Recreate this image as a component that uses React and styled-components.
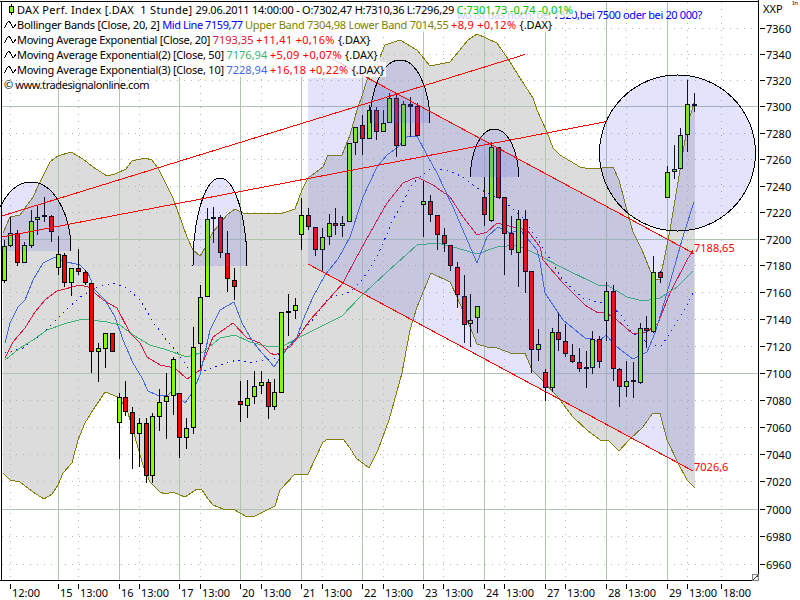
import React from "react";
import styled, { createGlobalStyle } from "styled-components";

const GlobalStyle = createGlobalStyle`
  html, body { margin: 0; padding: 0; background: #fff; }
  #root { width: 800px; height: 600px; overflow: hidden; }
`;

const FONT = `"Noto Sans", "Liberation Sans", sans-serif`;

/* price axis is logarithmic */
const priceY = (p) => Math.round(563.7 - 9587 * Math.log(p / 6960));
const PRICES = Array.from({ length: 21 }, (_, i) => 6960 + i * 20);
const MAJOR_X = [58, 119, 179, 240, 301, 362, 423, 484, 545, 606, 667];
const MINOR_X = [10, 78, 139, 200, 261, 322, 383, 443, 504, 565, 626, 687, 721];
const X_LABELS = [
  [10, "12:00"], [58, "15"], [78, "13:00"], [119, "16"], [139, "13:00"], [179, "17"], [200, "13:00"],
  [240, "20"], [261, "13:00"], [301, "21"], [322, "13:00"], [362, "22"], [383, "13:00"], [423, "23"],
  [443, "13:00"], [484, "24"], [504, "13:00"], [545, "27"], [565, "13:00"], [606, "28"], [626, "13:00"],
  [667, "29"], [687, "13:00"], [721, "18:00"],
];

const UPPER = [[3,233],[10,217],[20,215],[25,208],[33,197],[40,182],[50,162],[58,156],[71,152],[83,159],[93,167],[107,176],[115,174],[126,169],[132,161],[145,158],[152,160],[158,168],[173,198],[187,237],[193,250],[200,256],[205,248],[213,232],[227,215],[235,209],[243,213],[270,214],[283,213],[295,209],[302,190],[308,178],[323,167],[328,155],[342,155],[350,135],[357,110],[363,93],[367,80],[373,68],[380,57],[385,45],[400,40],[417,50],[430,66],[450,62],[468,40],[477,34],[497,43],[510,62],[520,78],[533,98],[537,110],[547,132],[553,148],[560,155],[580,167],[590,169],[602,168],[613,167],[619,180],[625,203],[633,232],[642,250],[650,270],[655,280],[660,279],[665,255],[670,230],[680,170],[688,123],[695,100]];
const LOWER = [[3,473],[10,480],[20,482],[33,492],[44,499],[52,494],[58,485],[63,473],[72,463],[78,440],[85,423],[93,410],[105,392],[113,395],[120,398],[128,413],[135,437],[143,465],[150,482],[160,492],[165,494],[173,492],[185,497],[197,489],[202,490],[208,499],[213,505],[223,509],[233,509],[247,517],[255,516],[275,506],[280,490],[295,474],[308,474],[323,442],[328,439],[338,440],[343,439],[350,448],[356,458],[369,468],[378,450],[389,420],[402,373],[410,330],[417,307],[431,273],[450,282],[457,297],[470,327],[477,344],[487,347],[497,348],[513,354],[525,353],[532,370],[540,378],[558,397],[573,417],[587,430],[600,440],[608,440],[619,451],[629,440],[643,427],[652,414],[660,413],[667,440],[678,463],[687,480],[695,488]];
const EMA10 = [[5,343],[10,323],[18,307],[25,300],[33,280],[43,263],[55,257],[63,261],[80,265],[88,273],[95,290],[105,300],[115,317],[123,340],[133,363],[142,378],[148,391],[157,395],[168,395],[173,390],[185,403],[192,393],[200,375],[210,330],[220,310],[234,302],[242,323],[253,342],[262,353],[270,362],[274,367],[280,358],[290,345],[297,337],[303,320],[313,297],[325,275],[338,259],[350,237],[363,197],[377,167],[387,155],[398,147],[407,137],[417,136],[427,155],[437,173],[453,207],[465,235],[477,263],[487,237],[498,227],[510,233],[520,230],[527,238],[537,250],[540,262],[545,293],[563,320],[585,338],[593,339],[598,342],[606,335],[617,347],[633,359],[647,352],[655,333],[667,293],[680,247],[685,230],[694,202]];
const EMA20 = [[5,358],[13,342],[25,328],[35,312],[45,300],[57,291],[80,285],[88,287],[103,300],[117,308],[130,333],[140,343],[147,357],[160,365],[175,368],[187,379],[200,370],[213,337],[233,323],[247,338],[260,343],[270,353],[275,355],[290,347],[298,337],[310,320],[328,300],[343,283],[355,260],[370,233],[387,203],[403,183],[417,177],[433,185],[450,197],[463,217],[477,235],[487,232],[497,223],[513,227],[527,230],[540,247],[543,260],[563,283],[585,305],[598,313],[605,312],[617,320],[633,334],[647,332],[658,323],[670,293],[687,260],[693,250]];
const EMA50 = [[5,360],[20,348],[33,340],[47,330],[67,323],[83,319],[107,322],[120,325],[133,335],[150,345],[167,350],[187,357],[203,352],[220,338],[235,335],[250,342],[270,347],[283,346],[298,338],[320,327],[342,316],[360,297],[387,272],[417,245],[437,243],[457,248],[477,254],[497,247],[517,245],[538,255],[563,268],[598,285],[607,285],[627,297],[643,301],[660,298],[677,287],[693,271]];
const MID = [[5,353],[23,348],[43,333],[63,313],[80,297],[97,287],[113,283],[127,288],[140,300],[153,322],[168,342],[177,352],[188,368],[203,371],[220,365],[237,360],[250,363],[275,358],[290,345],[303,330],[317,315],[328,298],[350,292],[362,280],[377,257],[393,220],[413,183],[430,169],[447,170],[463,177],[477,188],[503,200],[523,218],[540,243],[563,280],[583,298],[602,303],[620,313],[630,330],[638,337],[653,346],[662,345],[670,333],[687,305],[693,293]];

/* x, high, body top, body bottom, low, colour */
const CANDLES = [
  [4,240,246,281,283,"g"],[10,217,233,246,247,"g"],[17,230,233,263,266,"r"],[24,242,245,263,263,"g"],[31,210,221,246,248,"g"],[37,205,217,220,235,"g"],[44,197,215,217,222,"k"],[51,215,216,232,242,"r"],
  [58,236,254,268,275,"g"],[64,253,255,283,287,"r"],[71,268,268,283,296,"g"],[78,249,268,272,275,"r"],[85,270,272,283,285,"r"],[91,283,283,352,373,"r"],[98,343,348,352,382,"g"],[105,333,333,349,368,"g"],[112,333,333,352,352,"r"],
  [119,393,397,423,459,"g"],[125,381,397,412,416,"r"],[132,407,412,434,469,"r"],[139,418,423,434,467,"g"],[146,418,423,476,483,"r"],[152,413,416,476,483,"g"],[159,389,402,417,431,"g"],[166,373,396,402,439,"g"],[173,357,359,396,415,"g"],
  [179,393,393,438,458,"r"],[186,418,428,438,449,"g"],[193,327,347,428,434,"g"],[200,285,297,344,368,"g"],[207,208,219,297,297,"g"],[213,207,217,219,243,"g"],[220,215,217,253,258,"r"],[227,231,253,279,292,"r"],[234,268,280,287,300,"r"],
  [240,381,401,405,422,"r"],[247,380,398,406,418,"g"],[254,371,386,397,404,"g"],[261,371,382,386,394,"g"],[268,379,382,407,419,"r"],[274,379,392,407,410,"g"],[281,312,312,393,393,"g"],[288,294,311,313,336,"g"],[295,298,305,311,319,"g"],
  [301,198,215,235,250,"g"],[308,208,215,227,230,"r"],[315,227,227,250,256,"r"],[322,228,237,250,271,"g"],[329,214,223,237,245,"g"],[335,208,223,226,235,"r"],[342,216,223,226,237,"g"],[349,143,143,222,222,"g"],[355,127,127,143,155,"g"],
  [362,115,125,139,155,"r"],[369,105,110,139,139,"g"],[376,107,110,132,140,"r"],[383,110,123,132,132,"g"],[389,93,98,123,123,"g"],[396,93,98,146,157,"r"],[403,101,104,146,146,"g"],[410,97,104,107,137,"k"],[417,103,106,136,136,"r"],
  [423,181,201,205,237,"g"],[430,195,201,215,222,"r"],[437,215,215,235,250,"r"],[444,228,235,244,252,"r"],[450,245,245,266,271,"r"],[457,262,267,295,308,"r"],[464,275,296,325,343,"r"],[470,294,320,324,347,"g"],[477,306,306,318,333,"g"],
  [484,177,197,215,226,"r"],[491,142,147,221,222,"g"],[498,147,147,198,198,"r"],[504,197,197,234,275,"r"],[511,216,233,250,255,"r"],[518,210,219,253,287,"g"],[525,210,219,272,293,"r"],[531,271,271,350,373,"r"],[538,329,344,350,361,"g"],
  [545,369,372,388,401,"r"],[552,328,332,388,392,"g"],[558,313,332,340,351,"r"],[565,324,341,354,357,"r"],[572,344,355,362,363,"r"],[579,348,362,369,372,"r"],[586,351,367,369,388,"g"],[592,331,339,368,374,"g"],[599,336,339,362,368,"r"],
  [606,282,291,321,341,"g"],[613,285,291,369,381,"r"],[619,368,369,387,407,"r"],[626,361,381,387,397,"g"],[633,362,380,382,398,"k"],[640,323,328,383,384,"g"],[646,316,328,331,348,"r"],[653,256,272,332,333,"g"],[660,271,272,278,283,"r"],
  [667,166,172,198,198,"g"],[674,145,169,172,179,"g"],[680,128,135,169,169,"g"],[687,80,104,135,152,"g"],[694,93,104,104,112,"k"],
];

const pts = (a) => a.map((p) => p.join(",")).join(" ");
const arc = (cx, base, rx, ry) => `M${cx - rx} ${base} A${rx} ${ry} 0 0 1 ${cx + rx} ${base}`;

const Page = styled.div`
  width: 800px;
  height: 600px;
  display: grid;
  grid-template-columns: 759px 41px;
  grid-template-rows: 581px 19px;
  background: #fff;
  font-family: ${FONT};
  font-size: 11px;
  color: #000;
`;

const Plot = styled.div`
  position: relative;
  width: 759px;
  height: 581px;
  overflow: hidden;
`;

const Canvas = styled.svg`
  display: block;
`;

const AxisSvg = styled.svg`
  display: block;
  overflow: hidden;
  font-family: ${FONT};
  font-size: 11px;
  fill: #000;
`;

const Legend = styled.div`
  position: absolute;
  left: 2px;
  top: 2px;
  display: flex;
  flex-direction: column;
  align-items: flex-start;
`;

const LegendRow = styled.div`
  display: flex;
  align-items: center;
  height: 15px;
  line-height: 15px;
  padding: 0 2px;
  white-space: pre;
  background: ${(p) => (p.$plain ? "transparent" : "rgba(255, 255, 255, 0.8)")};
`;

const Swatch = styled.svg`
  flex: none;
  width: 13px;
  height: 11px;
`;

const Seg = styled.span`
  color: ${(p) => p.$c || "#000"};
  letter-spacing: ${(p) => p.$ls || 0}px;
`;

const Note = styled.div`
  position: absolute;
  left: 457px;
  top: 7px;
  color: #0000ff;
  line-height: 15px;
  letter-spacing: -0.37px;
  white-space: pre;
`;

const PriceTag = styled.div`
  position: absolute;
  left: 694px;
  top: ${(p) => p.$top}px;
  color: #ff0000;
  line-height: 15px;
`;

const ResizeGrip = styled.div`
  position: absolute;
  right: 0;
  bottom: 0;
  width: 7px;
  height: 7px;
  box-sizing: border-box;
  border: 1px solid #808080;
  background: linear-gradient(135deg, #f4f4f4 45%, #404040 45%, #404040 60%, #f4f4f4 60%);
`;

const Corner = styled.div`
  position: relative;
`;

const CornerMark = styled.span`
  position: absolute;
  right: 2px;
  top: -1px;
  font-size: 6px;
  line-height: 8px;
`;

const Wave = () => (
  <Swatch viewBox="0 0 13 11">
    <path d="M0.5 9 L3 4 L5 2 L7 5 L8.5 8 L10 8 L12 5" fill="none" stroke="#000" strokeWidth="1" shapeRendering="crispEdges" />
  </Swatch>
);

const CandleIcon = () => (
  <Swatch viewBox="0 0 13 11">
    <path d="M7.5 0 V11" stroke="#000" />
    <rect x="5.5" y="2.5" width="4" height="6" fill="#7fff00" stroke="#000" />
  </Swatch>
);

const Candle = ({ c }) => {
  const [x, hi, top, bot, lo, col] = c;
  const fill = col === "g" ? "#7fff00" : col === "r" ? "#ff0000" : "#000";
  return (
    <g>
      <line x1={x + 0.5} x2={x + 0.5} y1={hi} y2={lo} stroke="#000" />
      <rect x={x - 1.5} y={top + 0.5} width={4} height={Math.max(bot - top - 1, 1)} fill={fill} stroke="#000" />
    </g>
  );
};

const OVERLAY = "rgba(100,100,240,0.18)";

export default function App() {
  return (
    <>
      <GlobalStyle />
      <Page>
        <Plot>
          <Canvas width="759" height="581" viewBox="0 0 759 581" shapeRendering="crispEdges">
            <polygon points={pts([...UPPER, ...[...LOWER].reverse()])} fill="#dcdcdc" />
            {PRICES.map((p) => (
              <line key={p} x1="2" x2="758" y1={priceY(p) + 0.5} y2={priceY(p) + 0.5} stroke="#b4b4b4" strokeDasharray="1 6" />
            ))}
            {MINOR_X.map((x) => (
              <line key={x} x1={x + 0.5} x2={x + 0.5} y1="2" y2="580" stroke="#b4b4b4" strokeDasharray="1 6" />
            ))}
            {[7000, 7100, 7200, 7300].map((p) => (
              <line key={p} x1="2" x2="758" y1={priceY(p) + 0.5} y2={priceY(p) + 0.5} stroke="#b0c4b0" />
            ))}
            {MAJOR_X.map((x) => (
              <line key={x} x1={x + 0.5} x2={x + 0.5} y1="2" y2="580" stroke="#b0c4b0" />
            ))}
            <polyline points={pts(UPPER)} fill="none" stroke="#808000" />
            <polyline points={pts(LOWER)} fill="none" stroke="#808000" />
            <polyline points={pts(MID)} fill="none" stroke="#0000ff" strokeDasharray="1.5 4.5" />
            <polyline points={pts(EMA50)} fill="none" stroke="#3cb371" />
            <polyline points={pts(EMA20)} fill="none" stroke="#dc143c" />
            <polyline points={pts(EMA10)} fill="none" stroke="#4169e1" />
            {CANDLES.map((c) => (
              <Candle key={c[0]} c={c} />
            ))}
            <polygon points="308,40 308,264 694,471 694,253 367,78 308,78" fill={OVERLAY} />
            <path d={arc(31, 251, 40, 69)} fill={OVERLAY} />
            <path d={arc(220, 266, 27, 88)} fill={OVERLAY} />
            <path d={arc(400, 123, 30, 63)} fill={OVERLAY} />
            <path d={arc(494.5, 177, 24, 48)} fill={OVERLAY} />
            <ellipse cx="677.5" cy="153" rx="78" ry="78" fill={OVERLAY} stroke="#000" />
            <path d={arc(31, 251, 40, 69)} fill="none" stroke="#000" />
            <path d={arc(220, 266, 27, 88)} fill="none" stroke="#000" />
            <path d={arc(400, 123, 30, 63)} fill="none" stroke="#000" />
            <path d={arc(494.5, 177, 24, 48)} fill="none" stroke="#000" />
            <g stroke="#ff0000" fill="none">
              <line x1="2" y1="216" x2="525" y2="54.5" />
              <line x1="2" y1="237" x2="607" y2="121.5" />
              <line x1="325" y1="55" x2="693" y2="253" />
              <line x1="308" y1="264" x2="693" y2="471" />
              <path d="M691 253 h3 M692.5 251 v3" />
            </g>
            <path d="M1.5 1 V581 M0 1.5 H759 M0 580.5 H759 M758.5 0 V581" stroke="#000" fill="none" />
          </Canvas>
          <Note>wo ist das hoch, bei 7320,bei 7500 oder bei 20 000?</Note>
          <Legend>
            <LegendRow>
              <CandleIcon />
              <Seg $ls={0.3}>{"DAX Perf. Index [.DAX  1 Stunde] "}</Seg>
              <Seg $ls={-0.25}>{"29.06.2011 14:00:00 - O:7302,47 H:7310,36 L:7296,29 "}</Seg>
              <Seg $c="#00c000">C:7301,73 -0,74 -0,01%</Seg>
            </LegendRow>
            <LegendRow>
              <Wave />
              <Seg $ls={-0.25}>{"Bollinger Bands [Close, 20, 2] "}</Seg>
              <Seg $c="#0000ff" $ls={-0.45}>{"Mid Line 7159,77 "}</Seg>
              <Seg $c="#808000" $ls={-0.27}>{"Upper Band 7304,98 Lower Band 7014,55 "}</Seg>
              <Seg $c="#ff0000" $ls={0.3}>{"+8,9 +0,12% "}</Seg>
              {"{.DAX}"}
            </LegendRow>
            <LegendRow>
              <Wave />
              <Seg $ls={-0.28}>{"Moving Average Exponential [Close, 20] "}</Seg>
              <Seg $c="#dc143c">{"7193,35 "}</Seg>
              <Seg $c="#ff0000" $ls={0.3}>{"+11,41 +0,16% "}</Seg>
              {"{.DAX}"}
            </LegendRow>
            <LegendRow>
              <Wave />
              <Seg $ls={-0.24}>{"Moving Average Exponential(2) [Close, 50] "}</Seg>
              <Seg $c="#3cb371">{"7176,94 "}</Seg>
              <Seg $c="#ff0000" $ls={0.3}>{"+5,09 +0,07% "}</Seg>
              {"{.DAX}"}
            </LegendRow>
            <LegendRow>
              <Wave />
              <Seg $ls={-0.24}>{"Moving Average Exponential(3) [Close, 10] "}</Seg>
              <Seg $c="#4169e1">{"7228,94 "}</Seg>
              <Seg $c="#ff0000" $ls={0.3}>{"+16,18 +0,22% "}</Seg>
              {"{.DAX}"}
            </LegendRow>
            <LegendRow $plain>
              <Seg $ls={-0.4}>© www.tradesignalonline.com</Seg>
            </LegendRow>
          </Legend>
          <PriceTag $top={240}>7188,65</PriceTag>
          <PriceTag $top={459}>7026,6</PriceTag>
          <ResizeGrip />
        </Plot>
        <Corner>
          <CornerMark>In</CornerMark>
          <AxisSvg width="41" height="581" viewBox="759 0 41 581">
            <text x="763" y="13">XXP</text>
            {PRICES.map((p) => (
              <g key={p}>
                <line x1="760" x2="765" y1={priceY(p) + 0.5} y2={priceY(p) + 0.5} stroke="#000" shapeRendering="crispEdges" />
                <text x="766" y={priceY(p) + 4.5}>{p}</text>
              </g>
            ))}
          </AxisSvg>
        </Corner>
        <AxisSvg width="759" height="19" viewBox="0 581 759 19">
          {X_LABELS.map(([x, t]) => (
            <g key={`${x}${t}`}>
              <line x1={x + 0.5} x2={x + 0.5} y1="584" y2="589" stroke="#000" shapeRendering="crispEdges" />
              <text x={x + 2} y="597">{t}</text>
            </g>
          ))}
        </AxisSvg>
      </Page>
    </>
  );
}
